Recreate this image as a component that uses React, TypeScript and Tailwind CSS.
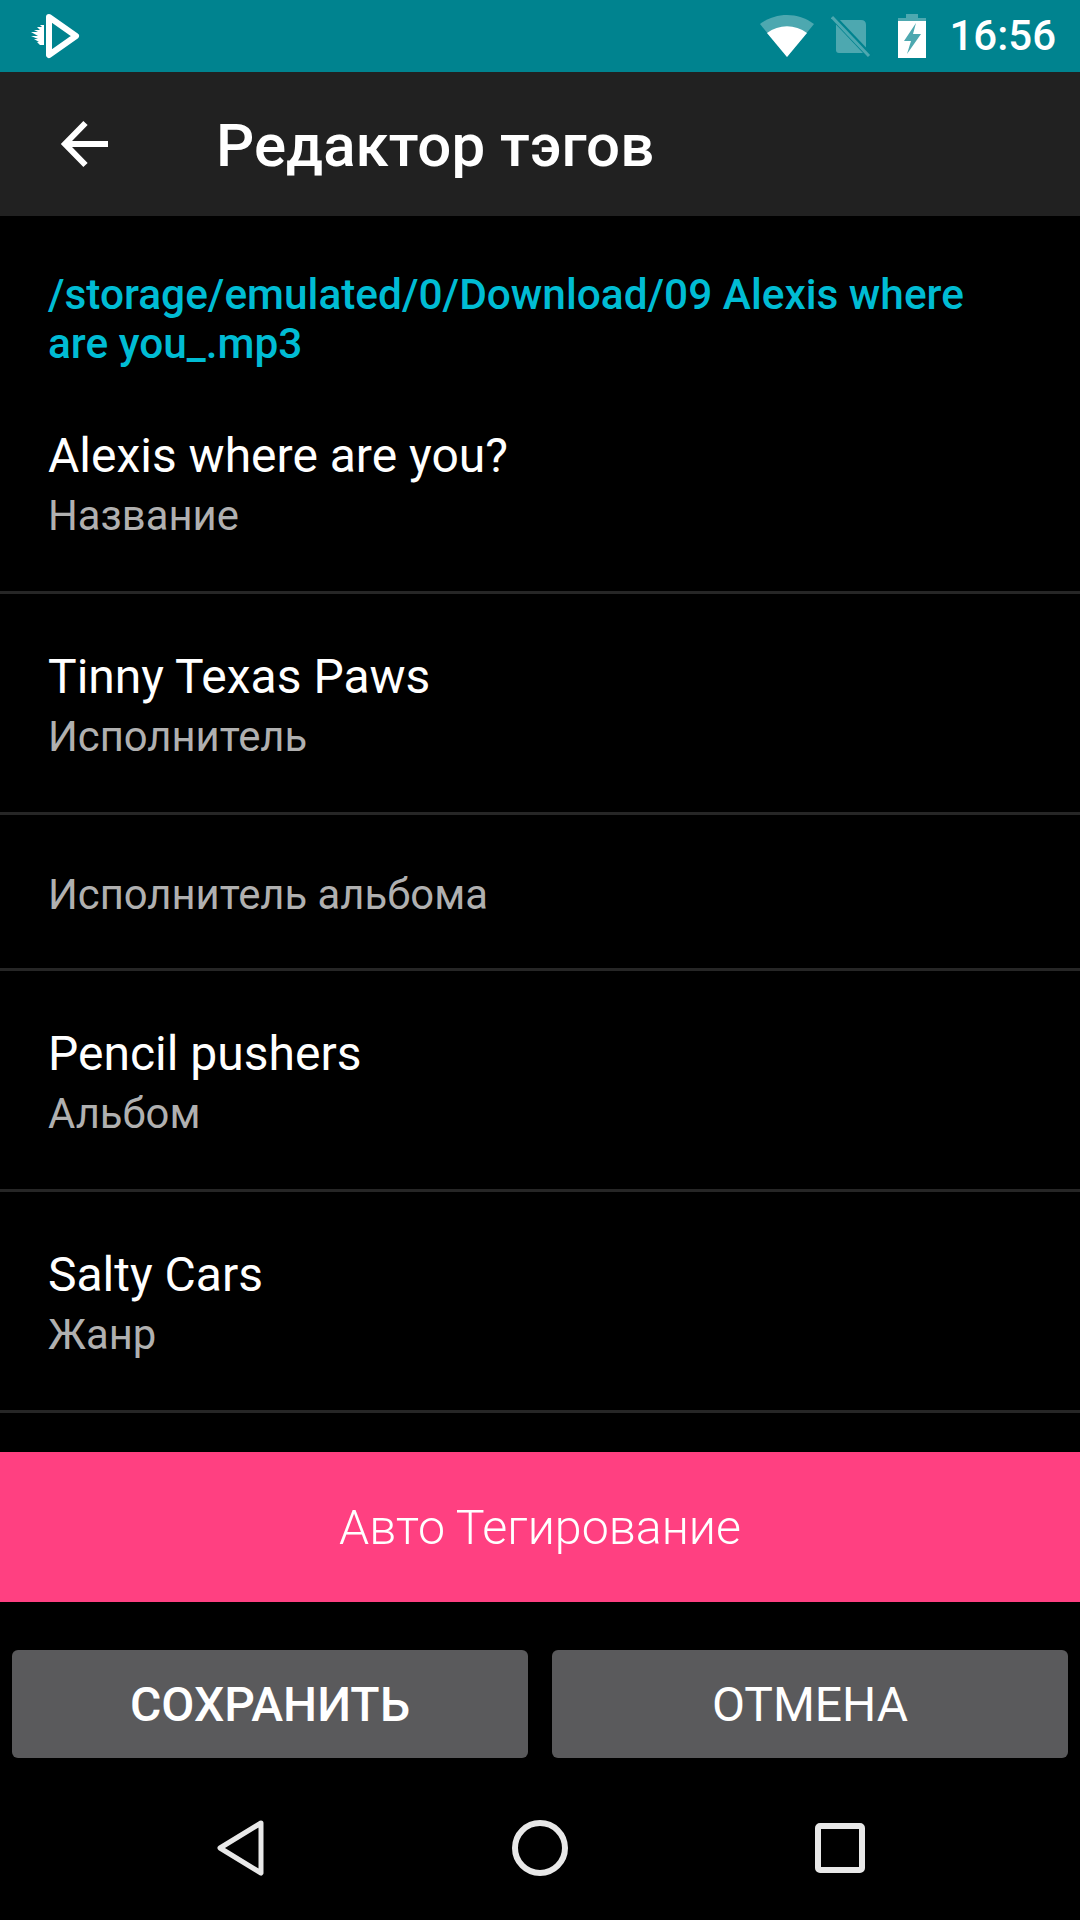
const rows = [
  { value: 'Alexis where are you?', label: 'Название', h: 'h-[221px] pt-[8px]' },
  { value: 'Tinny Texas Paws', label: 'Исполнитель', h: 'h-[221px] pt-[8px]' },
  { value: '', label: 'Исполнитель альбома', h: 'h-[156px] pt-[6px]' },
  { value: 'Pencil pushers', label: 'Альбом', h: 'h-[221px] pt-[8px]' },
  { value: 'Salty Cars', label: 'Жанр', h: 'h-[221px] pt-[8px]' },
]

function StatusBar() {
  return (
    <div className="h-[72px] shrink-0 bg-[#00838f] flex items-center pl-[30px] pr-[24px]">
      <svg width="50" height="46" viewBox="0 0 50 46" fill="none">
        <path d="M19 4 L46 23 L19 42 Z" stroke="white" strokeWidth="6" strokeLinejoin="round" />
        <path d="M14 12 H10 L12 14 H7 L10 17 H4 L8 19 H1 L8 23 H1 L8 26 H4 L9 29 H7 L10 32 H14 Z" fill="white" />
      </svg>
      <div className="ml-auto flex items-center">
        <svg width="54" height="42" viewBox="0 0 54 42">
          <path d="M27 42 L0 9 C16 -3 38 -3 54 9 Z" fill="white" fillOpacity="0.3" />
          <path d="M27 42 L7 18 C19 9 35 9 47 18 Z" fill="white" />
        </svg>
        <svg className="ml-[17px]" width="42" height="44" viewBox="0 0 42 44">
          <path d="M8 6 H30 Q35 6 35 11 V36 Q35 39 32 39 H8 Q5 39 5 36 V9 Q5 6 8 6 Z" fill="white" fillOpacity="0.3" />
          <path d="M2 3 L39 42" stroke="#00838f" strokeWidth="6" />
          <path d="M1 3 L38 42" stroke="white" strokeOpacity="0.3" strokeWidth="3" />
        </svg>
        <svg className="ml-[24px]" width="30" height="44" viewBox="0 0 30 44">
          <path d="M9 0 H21 V4 H29 V44 H1 V4 H9 Z" fill="white" fillOpacity="0.3" />
          <path fillRule="evenodd" d="M1 7 H29 V44 H1 Z M19 9 L7 27 H14 L10 40 L24 20 H16 Z" fill="white" />
        </svg>
        <span className="ml-[22px] text-[42px] leading-none font-medium text-white">16:56</span>
      </div>
    </div>
  )
}

function NavBar() {
  return (
    <div className="h-[144px] shrink-0 flex items-center justify-between pl-[216px] pr-[215px]">
      <svg width="48" height="56" viewBox="0 0 48 56" fill="none" stroke="#e8e8e8" strokeWidth="5" strokeLinejoin="round">
        <path d="M45 3 L4 28 L45 53 Z" />
      </svg>
      <svg width="56" height="56" viewBox="0 0 56 56" fill="none" stroke="#e8e8e8" strokeWidth="6">
        <circle cx="28" cy="28" r="25" />
      </svg>
      <svg width="50" height="50" viewBox="0 0 50 50" fill="none" stroke="#e8e8e8" strokeWidth="6" strokeLinejoin="round">
        <rect x="3" y="3" width="44" height="44" rx="2" />
      </svg>
    </div>
  )
}

export default function App() {
  return (
    <div className="w-[1080px] h-[1920px] bg-black flex flex-col font-['Roboto',sans-serif] overflow-hidden">
      <StatusBar />

      <div className="h-[144px] shrink-0 bg-[#212121] flex items-center">
        <svg className="ml-[48px]" width="72" height="72" viewBox="0 0 72 72" fill="none" stroke="white" strokeWidth="6">
          <path d="M60 36 H18" />
          <path d="M37.5 15 L17 36 L37.5 57" />
        </svg>
        <h1 className="ml-[96px] pt-[4px] text-[60px] font-medium text-white leading-none">Редактор тэгов</h1>
      </div>

      <div className="flex-1 min-h-0 overflow-hidden">
        <p className="pl-[48px] pr-[72px] pt-[54px] pb-[5px] text-[42.4px] leading-[49px] font-medium text-[#00bcd4]">
          /storage/emulated/0/Download/09 Alexis where are you_.mp3
        </p>
        {rows.map((r) => (
          <div key={r.label} className={`${r.h} px-[48px] flex flex-col justify-center border-b-[3px] border-[#262626]`}>
            {r.value && <p className="text-[48px] leading-[60px] text-white">{r.value}</p>}
            <p className="text-[41.8px] leading-[60px] text-[#b0b0b0]">{r.label}</p>
          </div>
        ))}
      </div>

      <div className="h-[150px] shrink-0 pt-[3px] bg-[#ff4081] flex items-center justify-center text-[48.3px] font-light text-white">
        Авто Тегирование
      </div>

      <div className="flex gap-[24px] px-[12px] pt-[48px] pb-[18px]">
        <button className="flex-1 h-[108px] pt-[2px] rounded-[6px] bg-[#5a5a5c] text-[48px] font-medium text-white">СОХРАНИТЬ</button>
        <button className="flex-1 h-[108px] pt-[2px] rounded-[6px] bg-[#5a5a5c] text-[48px] text-white">ОТМЕНА</button>
      </div>

      <NavBar />
    </div>
  )
}
